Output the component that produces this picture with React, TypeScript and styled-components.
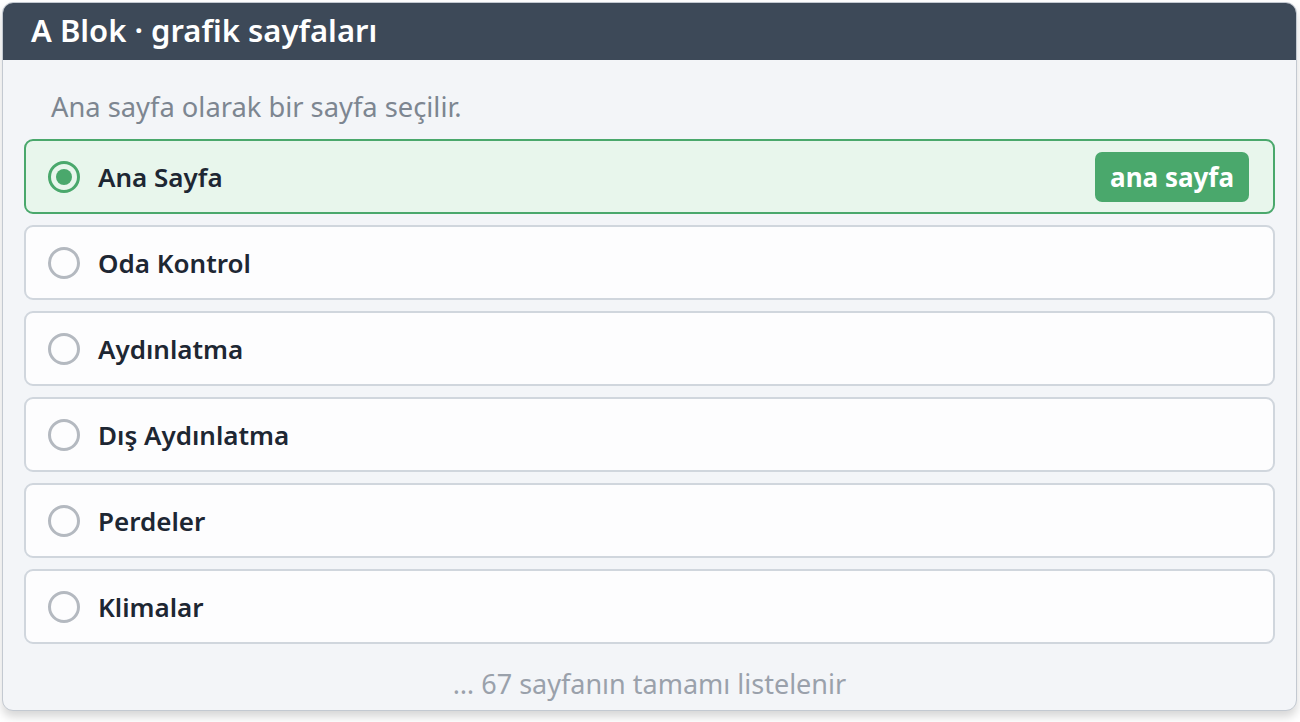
import styled, { createGlobalStyle } from "styled-components";

const GlobalStyle = createGlobalStyle`
  html, body {
    margin: 0;
    padding: 0;
    background: #ffffff;
  }
  body {
    font-family: "Noto Sans", "Open Sans", sans-serif;
  }
`;

const pages = [
  { name: "Ana Sayfa", home: true },
  { name: "Oda Kontrol" },
  { name: "Aydınlatma" },
  { name: "Dış Aydınlatma" },
  { name: "Perdeler" },
  { name: "Klimalar" },
];

function App() {
  return (
    <>
      <GlobalStyle />
      <S.Page>
        <S.Card>
          <S.Header>A Blok · grafik sayfaları</S.Header>
          <S.Body>
            <S.Hint>Ana sayfa olarak bir sayfa seçilir.</S.Hint>
            <S.List>
              {pages.map((p) => (
                <S.Row key={p.name} $active={!!p.home}>
                  <S.Radio $active={!!p.home} />
                  <S.Name>{p.name}</S.Name>
                  {p.home && <S.Badge>ana sayfa</S.Badge>}
                </S.Row>
              ))}
            </S.List>
            <S.Footer>… 67 sayfanın tamamı listelenir</S.Footer>
          </S.Body>
        </S.Card>
      </S.Page>
    </>
  );
}
export default App;

const Page = styled.div`
  padding: 2px 3px 12px 2px;
`;

const Card = styled.div`
  border: 1px solid #c3c9d1;
  border-radius: 11px;
  overflow: hidden;
  background: #f3f5f8;
  box-shadow: 0 6px 10px rgba(0, 0, 0, 0.16);
`;

const Header = styled.div`
  background: #3d4958;
  color: #ffffff;
  height: 57px;
  display: flex;
  align-items: center;
  padding: 0 28px 3px 28px;
  box-sizing: border-box;
  font-size: 31px;
  font-weight: 600;
`;

const Body = styled.div`
  padding: 30px 21px 10px 21px;
`;

const Hint = styled.div`
  color: #7d8691;
  font-size: 27.3px;
  padding-left: 27px;
  line-height: 34px;
  margin-bottom: 15px;
`;

const List = styled.div`
  display: flex;
  flex-direction: column;
  gap: 11px;
`;

const Row = styled.div<{ $active: boolean }>`
  height: 71px;
  display: flex;
  align-items: center;
  padding: 0 24px 0 22px;
  border: 2px solid ${(p) => (p.$active ? "#4aa86c" : "#d0d6dd")};
  border-radius: 9px;
  background: ${(p) => (p.$active ? "#e8f6ec" : "#fdfdfe")};
`;

const Radio = styled.span<{ $active: boolean }>`
  width: 32px;
  height: 32px;
  box-sizing: border-box;
  border-radius: 50%;
  border: 3px solid ${(p) => (p.$active ? "#4aa86c" : "#b4b9c0")};
  display: flex;
  align-items: center;
  justify-content: center;
  flex-shrink: 0;
  &::after {
    content: "";
    display: ${(p) => (p.$active ? "block" : "none")};
    width: 16px;
    height: 16px;
    border-radius: 50%;
    background: #4aa86c;
  }
`;

const Name = styled.span`
  margin-left: 18px;
  flex: 1;
  font-size: 26px;
  font-weight: 600;
  color: #1e2733;
`;

const Badge = styled.span`
  background: #4aa86c;
  color: #ffffff;
  border-radius: 7px;
  height: 50px;
  padding: 0 15px;
  display: flex;
  align-items: center;
  font-size: 26px;
  font-weight: 700;
`;

const Footer = styled.div`
  text-align: center;
  color: #9aa1ab;
  font-size: 27px;
  margin-top: 24px;
  line-height: 32px;
`;

const S = {
  Page,
  Card,
  Header,
  Body,
  Hint,
  List,
  Row,
  Radio,
  Name,
  Badge,
  Footer,
};
